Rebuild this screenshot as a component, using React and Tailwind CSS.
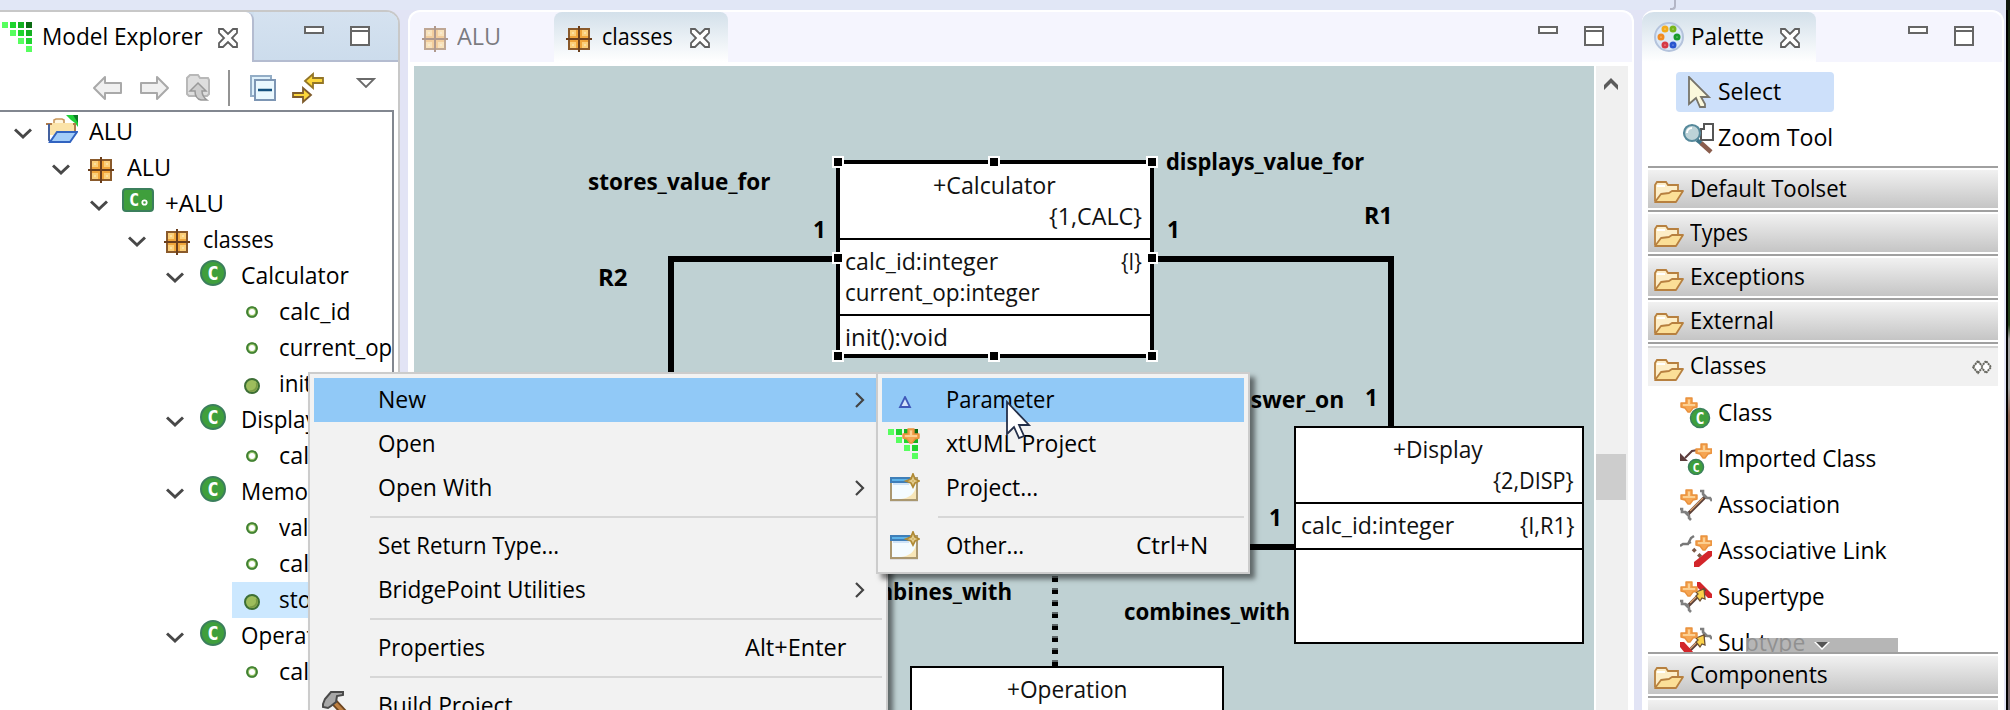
import { useLayoutEffect, useRef } from "react";

/* Text squeezed horizontally: to a given width, or by a default ratio. */
function T({ w, children, className = "", ratio = 0.935 }) {
  const outer = useRef(null);
  const inner = useRef(null);
  useLayoutEffect(() => {
    const natural = inner.current.offsetWidth;
    const width = w || natural * ratio;
    outer.current.style.width = width + "px";
    inner.current.style.transform = `scaleX(${width / natural})`;
  }, [w, ratio]);
  return (
    <span ref={outer} className={"block shrink-0 whitespace-nowrap " + className}>
      <span ref={inner} className="relative -top-px inline-block origin-left whitespace-pre">
        {children}
      </span>
    </span>
  );
}

/* ---------- icons ---------- */
const CloseX = ({ className = "" }) => (
  <svg className={"h-5 w-5 shrink-0 " + className} viewBox="0 0 10 10">
    <path d="M.5.5h2L5 3 7.5.5h2v2L7 5l2.5 2.5v2h-2L5 7 2.5 9.5h-2v-2L3 5 .5 2.5z" fill="#fff" stroke="#5f5f5f" strokeWidth=".9" />
  </svg>
);

const WindowButtons = () => (
  <div className="flex gap-[26px]">
    <div className="h-2 w-5 border-2 border-[#666] bg-white" />
    <div className="h-5 w-5 border-2 border-[#666] bg-white">
      <div className="mt-0.5 h-0.5 bg-[#666]" />
    </div>
  </div>
);

const BrandDots = () => (
  <g shapeRendering="crispEdges">
    <path fill="#57ff5f" d="M0 0h3v3H0zM4 4h3v3H4zM8 8h3v3H8zM12 12h3v3h-3z" />
    <path fill="#1fd42e" d="M4 0h3v3H4zM8 4h3v3H8zM12 8h3v3h-3z" />
    <path fill="#14b021" d="M8 0h3v3H8zM12 4h3v3h-3z" />
    <path fill="#0b6b12" d="M12 0h3v3h-3z" />
  </g>
);

const Package = ({ className = "" }) => (
  <svg className={"h-[26px] w-[26px] shrink-0 " + className} viewBox="0 0 13 13" shapeRendering="crispEdges">
    <rect x="1" y="1" width="11" height="11" fill="#8a5a2b" />
    <path fill="#f0a63c" d="M2 2h4v4H2zM7 2h4v4H7zM2 7h4v4H2zM7 7h4v4H7z" />
    <path fill="#fccf78" d="M2 2h3v3H2zM8 2h3v3H8zM2 8h3v3H2zM8 8h3v3H8z" />
    <path fill="#fbe0a0" d="M3 3h1v1H3zM9 3h1v1H9zM3 9h1v1H3zM9 9h1v1H9z" />
    <path fill="#6b3f1c" d="M6 0h1v13H6zM0 6h13v1H0z" />
  </svg>
);

const ClassIcon = () => (
  <svg className="h-[26px] w-[26px]" viewBox="0 0 26 26">
    <circle cx="13" cy="13" r="12" fill="#3f9f3c" stroke="#3b7f5c" strokeWidth="2" />
    <text x="13" y="20" textAnchor="middle" fontFamily="DejaVu Sans Mono" fontWeight="bold" fontSize="19" fill="#fff">C</text>
  </svg>
);

const ComponentIcon = () => (
  <svg className="h-6 w-8" viewBox="0 0 32 24">
    <rect x="1" y="1" width="30" height="22" rx="3" fill="#3f9f3c" stroke="#3b7f5c" strokeWidth="2" />
    <text x="12" y="17.500" textAnchor="middle" fontFamily="DejaVu Sans Mono" fontWeight="bold" fontSize="17" fill="#fff">C</text>
    <circle cx="22.500" cy="14.500" r="2.200" fill="none" stroke="#fff" strokeWidth="1.800" />
  </svg>
);

const Attribute = () => (
  <svg className="h-3 w-3" viewBox="0 0 12 12">
    <circle cx="6" cy="6" r="4.400" fill="#fff" stroke="#8fbf62" strokeWidth="2.800" />
    <circle cx="6" cy="6" r="5" fill="none" stroke="#3d7d33" strokeWidth="1.700" />
  </svg>
);

const Operation = () => (
  <svg className="h-4 w-4" viewBox="0 0 16 16">
    <circle cx="8" cy="8" r="7" fill="#9dbd5c" stroke="#3d6f35" strokeWidth="2" />
    <path d="M12.500 5a6 6 0 0 1-7 8" fill="none" stroke="#789a45" strokeWidth="1.800" />
  </svg>
);

const ProjectFolder = () => (
  <svg className="h-7 w-8" viewBox="0 0 32 28">
    <path d="M20 0h12v12l-3-4-4-3z" fill="#1fd038" />
    <path d="M27 0h5v8z" fill="#0b7b25" />
    <path d="M8 8V5l2-1h6l2 1v3" fill="#fff6e0" stroke="#c8965a" strokeWidth="1.600" />
    <path d="M3 10l1-2h23l1 2v10H3z" fill="#fbe3a9" />
    <path d="M0 9h6M27 9h2v8" fill="none" stroke="#b07c4c" strokeWidth="2" />
    <path d="M3 9v16l2 2" fill="none" stroke="#44619f" strokeWidth="2" />
    <path d="M11 17h20l-7 10H4z" fill="#a3cdf8" stroke="#3163c0" strokeWidth="2" />
  </svg>
);

const DrawerFolder = () => (
  <svg className="h-[23px] w-[30px] shrink-0" viewBox="0 0 30 23">
    <path d="M1 21V5l2-3h9l2 3h10v6" fill="#fdeec8" stroke="#b7803f" strokeWidth="1.800" />
    <path d="M3 6h8" stroke="#fff" strokeWidth="2" />
    <path d="M1 22l6-8 8-1 3-2h11l-7 11z" fill="#fbdf97" stroke="#b7803f" strokeWidth="1.800" strokeLinejoin="round" />
  </svg>
);

const Chevron = () => (
  <svg className="h-3 w-[18px]" viewBox="0 0 18 12">
    <path d="M1 1.500l8 7.500 8-7.500" fill="none" stroke="#484848" strokeWidth="3" />
  </svg>
);

const Spark = ({ x = 0, y = 0 }) => (
  <g transform={`translate(${x} ${y})`}>
    <path d="M6 1h6v5h5v4l-4 1-3 4H8l-3-4-4-1V6h5z" fill="#f5a552" stroke="#e9913c" strokeWidth="1.400" strokeLinejoin="round" />
    <path d="M9 2.500v6M3 8h12" stroke="#fcd092" strokeWidth="2" />
  </g>
);

const WizardWindow = () => (
  <svg className="h-[30px] w-[30px]" viewBox="0 0 30 30">
    <rect x="1" y="5" width="26" height="22" fill="#f4fcff" stroke="#aa9870" strokeWidth="2" />
    <path d="M26 13c-1 8-7 12-15 13h15z" fill="#f7e6b8" />
    <path d="M0 4h20v6H0z" fill="#3f7fb8" />
    <path d="M2 6h16v2H2z" fill="#5db3e8" />
    <path d="M3 11h16" stroke="#cfe4f7" strokeWidth="2" />
    <path d="M0 28.500h28" stroke="#ddd" />
    <path d="M23 1l2 5 4 2-4 2-2 4-2-4-5-2 5-2z" fill="#fff6d0" stroke="#b08a34" strokeWidth="1.800" />
    <path d="M23 4v8M19 8h8" stroke="#c9a650" />
  </svg>
);

const Bone = () => (
  <>
    <path d="M8 25L25 8" stroke="#5b4038" strokeWidth="3.400" />
    <path d="M10 22L23 9" stroke="#d9a070" strokeWidth="1.300" />
  </>
);
const ForkTop = () => <path d="M20 2h3v3l4 4h3l2 3M25 8l-2-3" fill="none" stroke="#808080" strokeWidth="2.600" />;
const ForkBottom = () => <path d="M0 20h2v3h3l4 4v2l2 2M5 23l4 2" fill="none" stroke="#808080" strokeWidth="2.600" />;
const StarArrow = () => <path d="M16 11l8-3 1 10-3-1-2 3-4-5 2-2z" fill="#fbd24b" stroke="#6d5032" strokeWidth="1.300" />;
const RedTop = () => <path d="M17 1h3l12 12v4h-4L17 6z" fill="#d3252a" />;
const RedBottom = () => <path d="M0 15h4l10 11v5h-5L0 20z" fill="#d3252a" />;

const toolIcons = {
  select: (
    <path d="M7 1v27l7-6 4 9h5v-3l-4-7h8z" fill="#fbf8dc" stroke="#77746a" strokeWidth="1.800" />
  ),
  zoom: (
    <>
      <path d="M19 7h3V2h9v16H19z" fill="#fff" stroke="#555" strokeWidth="2" />
      <path d="M15 18l5 4" stroke="#3d7387" strokeWidth="4" />
      <path d="M19 21l10 9" stroke="#8a5d4d" strokeWidth="4.500" />
      <circle cx="10" cy="11" r="8" fill="#bdd3d8" stroke="#56899b" strokeWidth="2.200" />
      <path d="M5 11a5 5 0 0 1 5-5" fill="none" stroke="#fff" strokeWidth="2" />
    </>
  ),
  class: (
    <>
      <Spark />
      <circle cx="20" cy="21" r="9.500" fill="#3f9f3c" stroke="#3b7f5c" strokeWidth="1.500" />
      <text x="20" y="26.500" textAnchor="middle" fontFamily="DejaVu Sans Mono" fontWeight="bold" fontSize="15" fill="#fff">C</text>
    </>
  ),
  imported: (
    <>
      <path d="M18 7l-6 1-7 7" fill="none" stroke="#5d3d3d" strokeWidth="2" />
      <path d="M0 10v8h8z" fill="#5d3d3d" />
      <Spark x="15" />
      <circle cx="16" cy="24" r="7.500" fill="#3f9f3c" stroke="#3b7f5c" strokeWidth="1.500" />
      <text x="16" y="28.500" textAnchor="middle" fontFamily="DejaVu Sans Mono" fontWeight="bold" fontSize="12" fill="#fff">C</text>
    </>
  ),
  association: (
    <>
      <Bone />
      <ForkTop />
      <ForkBottom />
      <Spark />
    </>
  ),
  link: (
    <>
      <path d="M0 11l3-2h5l3-6 3-2M7 9l4-2" fill="none" stroke="#777" strokeWidth="2.400" />
      <path d="M13 14l10 10" stroke="#7b5846" strokeWidth="3.600" strokeDasharray="3.500 4" />
      <path d="M28 16h4v5L19 32h-5v-5z" fill="#d3252a" />
      <Spark x="15" />
    </>
  ),
  supertype: (
    <>
      <RedTop />
      <Bone />
      <ForkBottom />
      <StarArrow />
      <Spark />
    </>
  ),
  subtype: (
    <>
      <Bone />
      <ForkTop />
      <RedBottom />
      <StarArrow />
      <Spark />
    </>
  ),
};

const ToolIcon = ({ name }) => (
  <svg className="h-8 w-8 shrink-0" viewBox="0 0 32 32">
    {toolIcons[name]}
  </svg>
);

/* ---------- model explorer ---------- */
const pads = ["pl-[14px]", "pl-[52px]", "pl-[90px]", "pl-[128px]", "pl-[166px]", "pl-[204px]"];

const tree = [
  [0, "project", "ALU", 44],
  [1, "package", "ALU", 44],
  [2, "component", "+ALU", 59],
  [3, "package", "classes", 71],
  [4, "class", "Calculator", 108],
  [5, "attr", "calc_id", 72],
  [5, "attr", "current_op", 113],
  [5, "op", "init"],
  [4, "class", "Display"],
  [5, "attr", "calc_id", 72],
  [4, "class", "Memory"],
  [5, "attr", "value"],
  [5, "attr", "calc_id", 72],
  [5, "op", "store", 0, true],
  [4, "class", "Operation"],
  [5, "attr", "calc_id", 72],
];

const treeIcon = {
  project: <div className="-mt-1.5"><ProjectFolder /></div>,
  package: <div className="mt-1 ml-1"><Package /></div>,
  component: <div className="-mt-2"><ComponentIcon /></div>,
  class: <div className="-mt-1.5 ml-0.5"><ClassIcon /></div>,
  attr: <div className="ml-2.5"><Attribute /></div>,
  op: <div className="mt-1 ml-2"><Operation /></div>,
};

function TreeRow({ row: [level, kind, label, w, selected] }) {
  const leaf = level === 5;
  return (
    <div className={"flex h-9 items-center " + pads[level]}>
      <div className="mt-1 w-7 shrink-0">{!leaf && <Chevron />}</div>
      <div className={"flex h-9 grow items-center " + (selected ? "bg-[#cce8ff]" : "")}>
        <div className="w-[46px] shrink-0">
          <div className="ml-1">{treeIcon[kind]}</div>
        </div>
        <T w={w} className="ml-px">{label}</T>
      </div>
    </div>
  );
}

function Explorer() {
  return (
    <section className="flex w-[400px] shrink-0 flex-col overflow-hidden rounded-tr-[14px] border-t-2 border-r-2 border-[#c8c8c8] bg-white">
      <div className="flex h-[50px] shrink-0 bg-[#cfdfee]">
        <div className="flex w-[254px] items-center rounded-tr-lg border-r-2 border-[#b4bcd0] bg-white pl-0.5">
          <svg className="h-[30px] w-[30px]" viewBox="0 0 15 15"><BrandDots /></svg>
          <T w={161} className="ml-[10px]">Model Explorer</T>
          <CloseX className="mt-0.5 ml-[15px]" />
        </div>
        <div className="grow border-b-2 border-[#b4bcd0] bg-gradient-to-b from-[#d5e2f0] to-[#ccdcec] pt-3.5 pl-[50px]">
          <WindowButtons />
        </div>
      </div>
      <div className="flex h-12 shrink-0 items-center pt-1 pl-[92px]">
        <svg className="h-7 w-[30px]" viewBox="0 0 30 28">
          <path d="M2 14L13 3v6h16v10H13v6z" fill="#f0f0f0" stroke="#a9a9a9" strokeWidth="2" strokeLinejoin="round" />
        </svg>
        <svg className="ml-[18px] h-7 w-[30px]" viewBox="0 0 30 28">
          <path d="M28 14L17 3v6H1v10h16v6z" fill="#f0f0f0" stroke="#a9a9a9" strokeWidth="2" strokeLinejoin="round" />
        </svg>
        <svg className="ml-4 h-7 w-6" viewBox="0 0 24 28">
          <path d="M1 20V4l3-3h8l2 3h8l1 2v14l-2 2H3z" fill="#dedede" stroke="#b8b8b8" strokeWidth="2" />
          <path d="M12 9l8 8h-4c0 4 1 6 5 9h-6c-4-1-6-4-6-9H4z" fill="#cdcdcd" stroke="#999" strokeWidth="1.500" />
        </svg>
        <div className="ml-[18px] h-9 w-0.5 bg-[#939393]" />
        <svg className="ml-5 h-[26px] w-[26px]" viewBox="0 0 26 26">
          <rect x="1" y="1" width="20" height="20" fill="#dff1fb" stroke="#93adc6" strokeWidth="2" />
          <rect x="5" y="5" width="20" height="20" fill="#eaf8fe" stroke="#7d96b4" strokeWidth="2" />
          <path d="M8 15h14" stroke="#14507e" strokeWidth="2.400" />
        </svg>
        <svg className="ml-4 h-8 w-8" viewBox="0 0 32 32">
          <path d="M13 9l8-7v4h10v5H21v5z" fill="#fcd73c" stroke="#937526" strokeWidth="1.800" />
          <path d="M19 23l-8-7v5H1v4h10v5z" fill="#fcd73c" stroke="#7f5c2c" strokeWidth="1.800" />
        </svg>
        <svg className="mb-2.5 ml-8 h-2.5 w-5" viewBox="0 0 20 10">
          <path d="M2 1h16l-8 8z" fill="#fff" stroke="#6a6a6a" strokeWidth="1.800" />
        </svg>
      </div>
      <div className="w-[394px] grow overflow-hidden border-t-2 border-r-2 border-[#828790] pt-0.5">
        {tree.map((row, i) => <TreeRow key={i} row={row} />)}
      </div>
    </section>
  );
}

/* ---------- diagram ---------- */
const Cell = ({ left, right, lw, rw }) => (
  <div className="flex h-[31px] items-center justify-between">
    <T w={lw}>{left}</T>
    {right && <T w={rw}>{right}</T>}
  </div>
);

const handles = [
  "left-[418px] top-[90px]", "left-[574px] top-[90px]", "left-[732px] top-[90px]",
  "left-[418px] top-[186px]", "left-[732px] top-[186px]",
  "left-[418px] top-[284px]", "left-[574px] top-[284px]", "left-[732px] top-[284px]",
];

const labels = [
  ["left-[174px] top-[99px]", "stores_value_for", 182],
  ["left-[184px] top-[195px]", "R2", 30],
  ["left-[399px] top-[147px]", "1"],
  ["left-[752px] top-[79px]", "displays_value_for", 198],
  ["left-[753px] top-[147px]", "1"],
  ["left-[950px] top-[133px]", "R1", 29],
  ["left-[951px] top-[315px]", "1"],
  ["left-[855px] top-[435px]", "1"],
  ["left-[808px] top-[317px]", "answer_on", 122],
  ["left-[710px] top-[529px]", "combines_with", 166],
  ["left-[432px] top-[509px]", "combines_with", 166],
];

function Diagram() {
  return (
    <div className="relative w-[1180px] shrink-0 overflow-hidden bg-[#bfd1d3]">
      <svg className="absolute top-0 left-0 h-[644px] w-[1180px]" viewBox="0 0 1180 644" shapeRendering="crispEdges">
        <path d="M422 193H257v200M740 193h237v168M834 481h46" fill="none" stroke="#000" strokeWidth="6" />
        <path d="M641 498v102" stroke="#5d6668" strokeWidth="6" strokeDasharray="6 6" />
        <path d="M641 500v100" stroke="#000" strokeWidth="6" strokeDasharray="4 8" />
      </svg>
      {labels.map(([pos, text, w], i) => (
        <div key={i} className={"absolute leading-[34px] font-bold " + pos}>
          <T w={w}>{text}</T>
        </div>
      ))}

      <div className="absolute top-[94px] left-[422px] h-[198px] w-[318px] border-4 border-black bg-white text-[#111]">
        <div className="h-[76px] border-b-2 border-black pt-1.5">
          <div className="flex h-[31px] items-center justify-center pr-0.5"><T w={123}>+Calculator</T></div>
          <div className="flex h-[31px] items-center justify-end pr-2"><T w={93}>{"{1,CALC}"}</T></div>
        </div>
        <div className="h-[76px] border-b-2 border-black pt-1.5 pr-2 pl-[5px]">
          <Cell left="calc_id:integer" lw={153} right="{I}" rw={21} />
          <Cell left="current_op:integer" lw={195} />
        </div>
        <div className="pt-1.5 pl-[5px]"><Cell left="init():void" lw={103} /></div>
      </div>
      {handles.map((pos) => (
        <div key={pos} className={"absolute h-3 w-3 border-2 border-white bg-black " + pos} />
      ))}

      <div className="absolute top-[360px] left-[880px] h-[218px] w-[290px] border-2 border-black bg-white text-[#111]">
        <div className="h-[76px] border-b-2 border-black pt-1.5">
          <div className="flex h-[31px] items-center justify-center pr-0.5"><T w={90}>+Display</T></div>
          <div className="flex h-[31px] items-center justify-end pr-2"><T w={81}>{"{2,DISP}"}</T></div>
        </div>
        <div className="h-[46px] border-b-2 border-black pt-1.5 pr-2 pl-[5px]">
          <Cell left="calc_id:integer" lw={153} right="{I,R1}" rw={54} />
        </div>
      </div>

      <div className="absolute top-[600px] left-[496px] h-[100px] w-[314px] border-2 border-black bg-white pt-1.5 text-[#111]">
        <div className="flex h-[31px] items-center justify-center"><T w={120}>+Operation</T></div>
      </div>
    </div>
  );
}

function Editor() {
  return (
    <section className="flex w-[1226px] shrink-0 flex-col overflow-hidden rounded-t-[12px] border-x-2 border-t-2 border-white bg-white">
      <div className="flex h-[50px] shrink-0 bg-[#f5f5fe]">
        <div className="flex w-[144px] items-center pl-3 opacity-50">
          <Package className="mt-1" />
          <T w={44} className="ml-[9px]">ALU</T>
        </div>
        <div className="flex w-[174px] items-center rounded-t-lg bg-gradient-to-b from-[#d3e0ea] to-white pl-3">
          <Package className="mt-1" />
          <T w={71} className="ml-[10px]">classes</T>
          <CloseX className="mt-0.5 ml-[17px]" />
        </div>
        <div className="flex grow justify-end pt-3.5 pr-7"><WindowButtons /></div>
      </div>
      <div className="flex min-h-0 grow gap-0.5 pt-1 pl-1">
        <Diagram />
        <div className="w-8 bg-[#f0f0f0]">
          <svg className="mt-3 ml-2 h-3 w-3.5" viewBox="0 0 14 12">
            <path d="M0 12V7l7-7 7 7v5L7 5z" fill="#5b5b5b" />
          </svg>
          <div className="mt-[364px] h-[46px] w-[30px] bg-[#cdcdcd]" />
        </div>
      </div>
    </section>
  );
}

/* ---------- palette ---------- */
const Drawer = ({ label, w }) => (
  <div className="h-11 shrink-0 border-t-2 border-[#a0a0a0] pt-0.5 pb-0.5">
    <div className="flex h-[38px] items-center bg-gradient-to-b from-[#f1f1f1] to-[#c5c5c5] pl-1.5">
      <div className="mt-1"><DrawerFolder /></div>
      <T w={w} className="ml-1.5">{label}</T>
    </div>
  </div>
);

const tools = [
  ["class", "Class", 54],
  ["imported", "Imported Class", 158],
  ["association", "Association", 122],
  ["link", "Associative Link", 169],
  ["supertype", "Supertype", 107],
  ["subtype", "Subtype", 87],
];

function Palette() {
  return (
    <section className="flex w-[362px] shrink-0 flex-col overflow-hidden rounded-t-[12px] border-t-2 border-r-2 border-white bg-white">
      <div className="flex h-[50px] shrink-0 bg-[#f5f5fe]">
        <div className="flex w-[174px] items-center rounded-tr-lg bg-gradient-to-b from-[#d3e0ea] to-white pl-3">
          <svg className="h-[30px] w-[30px]" viewBox="0 0 30 30">
            <circle cx="15" cy="15" r="14" fill="#dce9f8" stroke="#b4c3dc" strokeWidth="2" />
            <g strokeWidth="3" fill="#fff">
              <circle cx="11" cy="7" r="2" stroke="#f2ab1c" />
              <circle cx="19" cy="7" r="2" stroke="#77b51d" />
              <circle cx="7" cy="15" r="2" stroke="#f08b24" />
              <circle cx="23" cy="15" r="2" stroke="#189a2c" />
              <circle cx="11" cy="23" r="2" stroke="#d63a46" />
              <circle cx="19" cy="23" r="2" stroke="#2a55cf" />
            </g>
          </svg>
          <T w={73} className="ml-[7px]">Palette</T>
          <CloseX className="mt-0.5 ml-[16px]" />
        </div>
        <div className="flex grow justify-end pt-3.5 pr-7"><WindowButtons /></div>
      </div>
      <div className="flex min-h-0 grow flex-col pr-1 pl-1.5">
        <div className="h-[104px] shrink-0 pt-2.5 pl-7">
          <div className="flex h-10 w-[158px] items-center rounded-sm bg-[#cde0fa] pl-1.5">
            <ToolIcon name="select" />
            <T w={63} className="ml-1">Select</T>
          </div>
          <div className="mt-1 flex h-11 items-center pl-1.5">
            <ToolIcon name="zoom" />
            <T w={115} className="ml-1">Zoom Tool</T>
          </div>
        </div>
        <Drawer label="Default Toolset" w={157} />
        <Drawer label="Types" w={58} />
        <Drawer label="Exceptions" w={115} />
        <Drawer label="External" w={84} />
        <div className="h-11 shrink-0 border-t-2 border-[#a0a0a0] pt-0.5">
          <div className="flex h-10 items-center border-t-2 border-[#d2d2d2] bg-[#f1f1f1] pr-1.5 pl-1.5">
            <div className="mt-1"><DrawerFolder /></div>
            <T w={76} className="relative -top-px ml-1.5">Classes</T>
            <svg className="ml-auto h-4 w-5" viewBox="0 0 20 16">
              <path d="M6 2L1 8l5 6 4-5 4 5 5-6-5-6-4 5z" fill="#fff" stroke="#66665e" strokeWidth="2" strokeDasharray="2 .6" />
            </svg>
          </div>
        </div>
        <div className="relative h-[266px] shrink-0 overflow-hidden pt-1">
          {tools.map(([icon, label, w]) => (
            <div key={label} className="flex h-[46px] items-center pl-8">
              <ToolIcon name={icon} />
              <T w={w} className="ml-1.5">{label}</T>
            </div>
          ))}
          <div className="absolute bottom-0 left-[98px] flex h-3.5 w-[152px] justify-center bg-[#a9a9a9]/85">
            <svg className="mt-1 h-2 w-4" viewBox="0 0 16 8">
              <path d="M0 0h16L8 8z" fill="#fff" />
              <path d="M2 0h12L8 6z" fill="#555" />
            </svg>
          </div>
        </div>
        <Drawer label="Components" w={138} />
        <Drawer label="" />
      </div>
    </section>
  );
}

/* ---------- menus ---------- */
const Arrow = () => (
  <svg className="h-4 w-2.5" viewBox="0 0 10 16">
    <path d="M1 1l7 7-7 7" fill="none" stroke="#444" strokeWidth="2.200" />
  </svg>
);

function Item({ icon, label, w, keys, kw, arrow, active }) {
  return (
    <div className={"flex h-11 items-center " + (active ? "bg-[#91c9f7]" : "")}>
      <div className="flex w-16 shrink-0 pl-1.5">{icon}</div>
      <T w={w}>{label}</T>
      {keys && <T w={kw} className="mr-9 ml-auto">{keys}</T>}
      {arrow && <div className="mr-[17px] ml-auto"><Arrow /></div>}
    </div>
  );
}

const Sep = () => (
  <div className="h-3.5 pt-1.5 pl-14"><div className="h-0.5 bg-[#d7d7d7]" /></div>
);

const menuBox =
  "absolute border-2 border-[#cccccc] bg-[#f2f2f2] p-1 shadow-[5px_5px_5px_rgba(0,0,0,0.5)] ";

function Menus() {
  return (
    <>
      <div className={menuBox + "top-[372px] left-[308px] h-[360px] w-[580px]"}>
        <Item label="New" w={48} arrow active />
        <Item label="Open" w={58} />
        <Item label="Open With" w={114} arrow />
        <Sep />
        <Item label="Set Return Type..." w={181} />
        <Item label="BridgePoint Utilities" w={208} arrow />
        <Sep />
        <Item label="Properties" w={107} keys="Alt+Enter" kw={101} />
        <Sep />
        <Item
          label="Build Project"
          w={135}
          icon={
            <svg className="ml-0.5 h-8 w-8" viewBox="0 0 32 32">
              <path d="M12 12l16 17" stroke="#6c4520" strokeWidth="7" />
              <path d="M12 12l16 17" stroke="#bd8042" strokeWidth="3.500" />
              <path d="M1 14l2-5 6-7h12v3l-6 1-1 6-5 4-3 2-5-1z" fill="#a7a7a7" stroke="#4a4a4a" strokeWidth="2" />
            </svg>
          }
        />
      </div>
      <div className={menuBox + "top-[372px] left-[876px] h-[202px] w-[374px]"}>
        <Item
          label="Parameter"
          w={108}
          active
          icon={
            <svg className="mt-1 ml-2.5 h-3 w-3.5" viewBox="0 0 14 12">
              <path d="M7 1l5 10H2z" fill="#d5e4fa" stroke="#3f58b9" strokeWidth="1.800" />
            </svg>
          }
        />
        <Item
          label="xtUML Project"
          w={150}
          icon={
            <svg className="h-8 w-8" viewBox="0 0 32 32">
              <g transform="translate(0 1) scale(2)"><BrandDots /></g>
              <Spark x="14" />
            </svg>
          }
        />
        <Item label="Project..." w={92} icon={<div className="ml-0.5"><WizardWindow /></div>} />
        <Sep />
        <Item label="Other..." w={78} keys="Ctrl+N" kw={72} icon={<div className="ml-0.5"><WizardWindow /></div>} />
      </div>
      <svg className="absolute top-[400px] left-[1005px] h-10 w-7" viewBox="0 0 28 40">
        <path d="M2 2v32l7-7 5 11 5-2-5-11h10z" fill="#fff" stroke="#25304a" strokeWidth="1.800" />
      </svg>
    </>
  );
}

export default function App() {
  return (
    <div className="relative flex h-[710px] w-[2010px] flex-col overflow-hidden bg-[#e2e4f5] font-['Open_Sans','Noto_Sans',sans-serif] text-[24px] leading-9 text-black">
      <div className="flex h-2.5 shrink-0 bg-[#e1e7f6]">
        <div className="ml-[1670px] h-2.5 w-1.5 rounded-br border-r-2 border-b-2 border-[#b3b6c6]" />
        <div className="ml-auto w-1 bg-[#101a0c]" />
      </div>
      <div className="flex min-h-0 grow gap-2">
        <Explorer />
        <Editor />
        <div className="flex gap-0.5">
          <Palette />
          <div className="w-1 border-l-2 border-black bg-[linear-gradient(to_bottom,#15230f_0%,#22401a_45%,#a5a5a5_47%,#a5a5a5_54%,#8e6250_58%,#8e6250_90%,#6d6670_100%)]" />
        </div>
      </div>
      <Menus />
    </div>
  );
}
